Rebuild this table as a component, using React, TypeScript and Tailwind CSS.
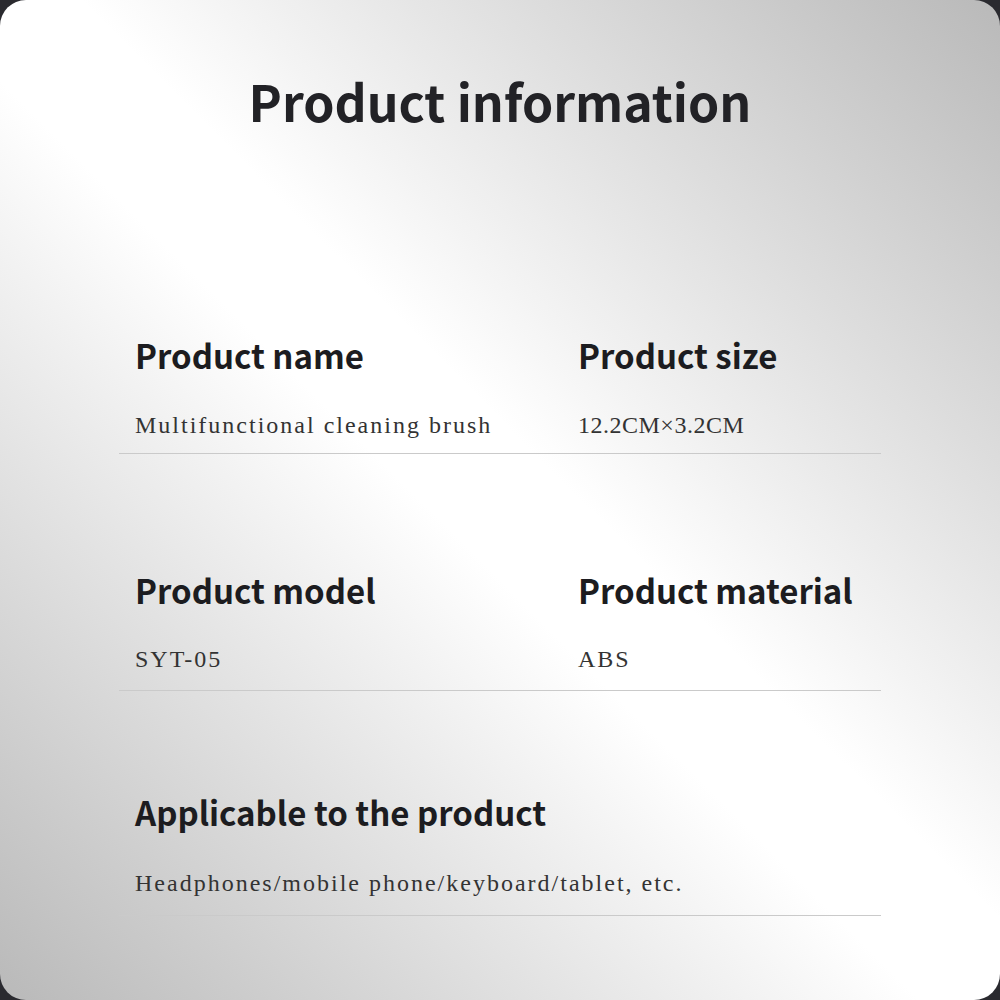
const sans = { fontFamily: '"Noto Sans CJK SC", "Noto Sans", sans-serif' };
const serif = { fontFamily: '"Liberation Serif", "Noto Sans CJK SC", serif' };

interface Field {
  label: string;
  value: string;
  tight?: boolean;
}

const rows: { fields: Field[]; top: string; gap: string; bottom: string }[] = [
  {
    fields: [
      { label: "Product name", value: "Multifunctional cleaning brush" },
      { label: "Product size", value: "12.2CM×3.2CM", tight: true },
    ],
    top: "mt-[214px]",
    gap: "mt-[41px]",
    bottom: "pb-[16px]",
  },
  {
    fields: [
      { label: "Product model", value: "SYT-05" },
      { label: "Product material", value: "ABS" },
    ],
    top: "mt-[120px]",
    gap: "mt-[40px]",
    bottom: "pb-[19px]",
  },
  {
    fields: [
      {
        label: "Applicable to the product",
        value: "Headphones/mobile phone/keyboard/tablet, etc.",
      },
    ],
    top: "mt-[105px]",
    gap: "mt-[42px]",
    bottom: "pb-[20px]",
  },
];

export default function App() {
  return (
    <div className="w-[1000px] h-[1000px] bg-[#2a2a2f]">
      <div className="h-full rounded-[26px] overflow-hidden bg-[linear-gradient(45deg,#b9b9b9_0%,#ffffff_46%,#ffffff_54%,#b9b9b9_100%)]">
        <h1
          style={sans}
          className="pt-[75px] text-center text-[50px] leading-none font-bold text-[#222226]"
        >
          Product information
        </h1>

        <div className="w-[762px] mx-auto">
          {rows.map((row, i) => (
            <div
              key={i}
              className={`${row.top} ${row.bottom} pl-4 border-b border-[#cacaca] grid grid-cols-[443px_1fr]`}
            >
              {row.fields.map((f) => (
                <div key={f.label} className="whitespace-nowrap">
                  <div
                    style={sans}
                    className="text-[33px] leading-none font-bold text-[#1c1c20]"
                  >
                    {f.label}
                  </div>
                  <div
                    style={serif}
                    className={`${row.gap} text-[24px] leading-[24px] ${
                      f.tight ? "tracking-[0.5px]" : "tracking-[2px]"
                    } text-[#333]`}
                  >
                    {f.value}
                  </div>
                </div>
              ))}
            </div>
          ))}
        </div>
      </div>
    </div>
  );
}
